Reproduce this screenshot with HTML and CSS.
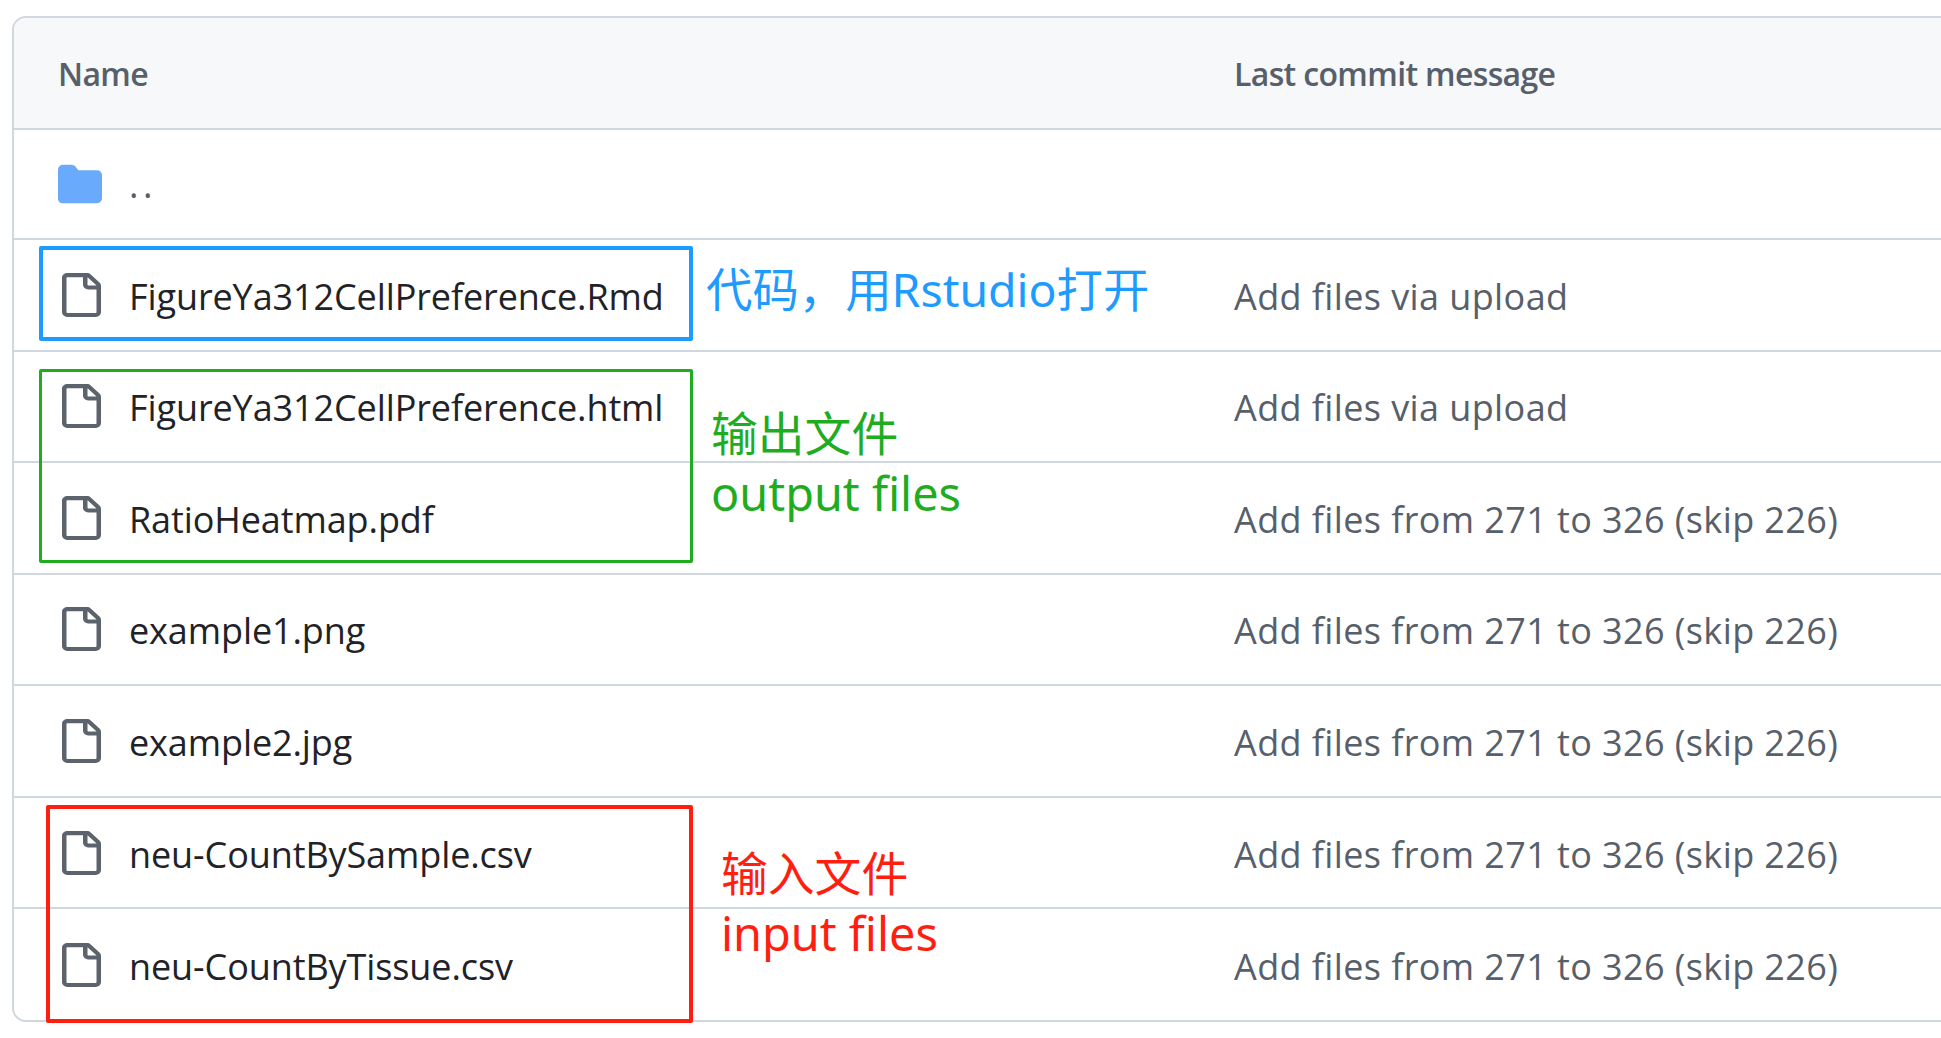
FILE: index.html
```html
<!DOCTYPE html>
<html>
<head>
    <title>FigureYa312CellPreference</title>
    <link rel="stylesheet" href="styles.css">
</head>
<body>
    <svg class="icon-defs" width="0" height="0">
        <symbol id="file-icon" viewBox="0 0 16 16" preserveAspectRatio="none">
            <path d="M2 1.75C2 .784 2.784 0 3.75 0h6.586c.464 0 .909.184 1.237.513l2.914 2.914c.329.328.513.773.513 1.237v9.586A1.75 1.75 0 0 1 13.25 16h-9.5A1.75 1.75 0 0 1 2 14.25Zm1.75-.25a.25.25 0 0 0-.25.25v12.5c0 .138.112.25.25.25h9.5a.25.25 0 0 0 .25-.25V6h-2.75A1.75 1.75 0 0 1 9 4.25V1.5Zm6.75.062V4.25c0 .138.112.25.25.25h2.688l-.011-.013-2.914-2.914-.013-.011Z"></path>
        </symbol>
    </svg>

    <div class="file-table">
        <div class="row header">
            <div class="name-col">Name</div>
            <div>Last commit message</div>
        </div>
        <div class="row parent-row">
            <div class="name-col">
                <svg class="folder" viewBox="0 0 16 16"><path d="M1.75 1A1.75 1.75 0 0 0 0 2.75v10.5C0 14.216.784 15 1.75 15h12.5A1.75 1.75 0 0 0 16 13.25v-8.5A1.75 1.75 0 0 0 14.25 3H7.5a.25.25 0 0 1-.2-.1l-.9-1.2C5.97 1.26 5.44 1 4.9 1H1.75Z"></path></svg>
                <span class="dots">..</span>
            </div>
        </div>
        <div class="row">
            <div class="name-col"><svg class="file"><use href="#file-icon"></use></svg><span class="file-name">FigureYa312CellPreference.Rmd</span></div>
            <div class="message">Add files via upload</div>
        </div>
        <div class="row">
            <div class="name-col"><svg class="file"><use href="#file-icon"></use></svg><span class="file-name">FigureYa312CellPreference.html</span></div>
            <div class="message">Add files via upload</div>
        </div>
        <div class="row">
            <div class="name-col"><svg class="file"><use href="#file-icon"></use></svg><span class="file-name">RatioHeatmap.pdf</span></div>
            <div class="message">Add files from 271 to 326 (skip 226)</div>
        </div>
        <div class="row">
            <div class="name-col"><svg class="file"><use href="#file-icon"></use></svg><span class="file-name">example1.png</span></div>
            <div class="message">Add files from 271 to 326 (skip 226)</div>
        </div>
        <div class="row">
            <div class="name-col"><svg class="file"><use href="#file-icon"></use></svg><span class="file-name">example2.jpg</span></div>
            <div class="message">Add files from 271 to 326 (skip 226)</div>
        </div>
        <div class="row">
            <div class="name-col"><svg class="file"><use href="#file-icon"></use></svg><span class="file-name">neu-CountBySample.csv</span></div>
            <div class="message">Add files from 271 to 326 (skip 226)</div>
        </div>
        <div class="row last">
            <div class="name-col"><svg class="file"><use href="#file-icon"></use></svg><span class="file-name">neu-CountByTissue.csv</span></div>
            <div class="message">Add files from 271 to 326 (skip 226)</div>
        </div>
    </div>

    <!-- hand drawn notes on top of the table -->
    <div class="box box-blue"></div>
    <div class="box box-green"></div>
    <div class="box box-red"></div>
    <div class="note note-blue">代码，用Rstudio打开</div>
    <div class="note note-green">输出文件<br><span class="latin">output files</span></div>
    <div class="note note-red">输入文件<br><span class="latin">input files</span></div>
</body>
</html>
```

FILE: styles.css
```css
html, body {
    margin: 0;
    height: 1038px;
    overflow: hidden;
    background: #fff;
}

body {
    position: relative;
    font-family: "Open Sans", "Noto Sans CJK SC", sans-serif;
    font-size: 36px;
    letter-spacing: -0.1px;
    color: #1f2328;
}

.icon-defs {
    position: absolute;
}

.file-table {
    width: 2000px;
    margin: 16px 0 0 12px;
    border: 2px solid #d0d7de;
    border-radius: 14px;
    box-sizing: border-box;
    overflow: hidden;
}

.row {
    display: flex;
    align-items: center;
    height: 111.55px;
    box-sizing: border-box;
    border-bottom: 2px solid #d0d7de;
}

.row.last {
    height: 111px;
    border-bottom: none;
}

.header {
    height: 112px;
    background: #f6f8fa;
    color: #57606a;
    font-weight: 600;
    font-size: 32px;
    letter-spacing: -0.65px;
}

.parent-row {
    height: 110px;
}

.name-col {
    display: flex;
    align-items: center;
    width: 1220px;
    padding-left: 44px;
    box-sizing: border-box;
}

.file-name {
    padding-top: 3px;
}

.message {
    padding-top: 3px;
    color: #57606a;
    letter-spacing: 0.4px;
}

.folder {
    width: 44px;
    height: 44px;
    margin-right: 27px;
    fill: #6aaafc;
}

.file {
    width: 48px;
    height: 44px;
    margin: 0 25px 0 -2px;
    fill: #5c636c;
    flex-shrink: 0;
}

.dots {
    color: #57606a;
    letter-spacing: 4.5px;
}

.box {
    position: absolute;
    box-sizing: border-box;
    border: 4px solid;
    border-radius: 2px;
}

.box-blue {
    left: 39px;
    top: 246px;
    width: 654px;
    height: 95px;
    border-color: #1e9bff;
}

.box-green {
    left: 39px;
    top: 369px;
    width: 654px;
    height: 194px;
    border-width: 3px;
    border-color: #1fad1f;
}

.box-red {
    left: 46px;
    top: 805px;
    width: 647px;
    height: 218px;
    border-color: #ff1f10;
}

.note {
    position: absolute;
    font-family: "Noto Sans", "Noto Sans CJK SC", sans-serif;
    font-size: 46.8px;
    line-height: 60px;
    letter-spacing: 0;
    white-space: nowrap;
}

.note-blue {
    left: 706px;
    top: 259px;
    font-size: 46.4px;
    color: #1e9bff;
}

.note-green {
    left: 711px;
    top: 403px;
    color: #1fad1f;
}

.note-red {
    left: 721px;
    top: 843px;
    color: #ff1f10;
}
```
